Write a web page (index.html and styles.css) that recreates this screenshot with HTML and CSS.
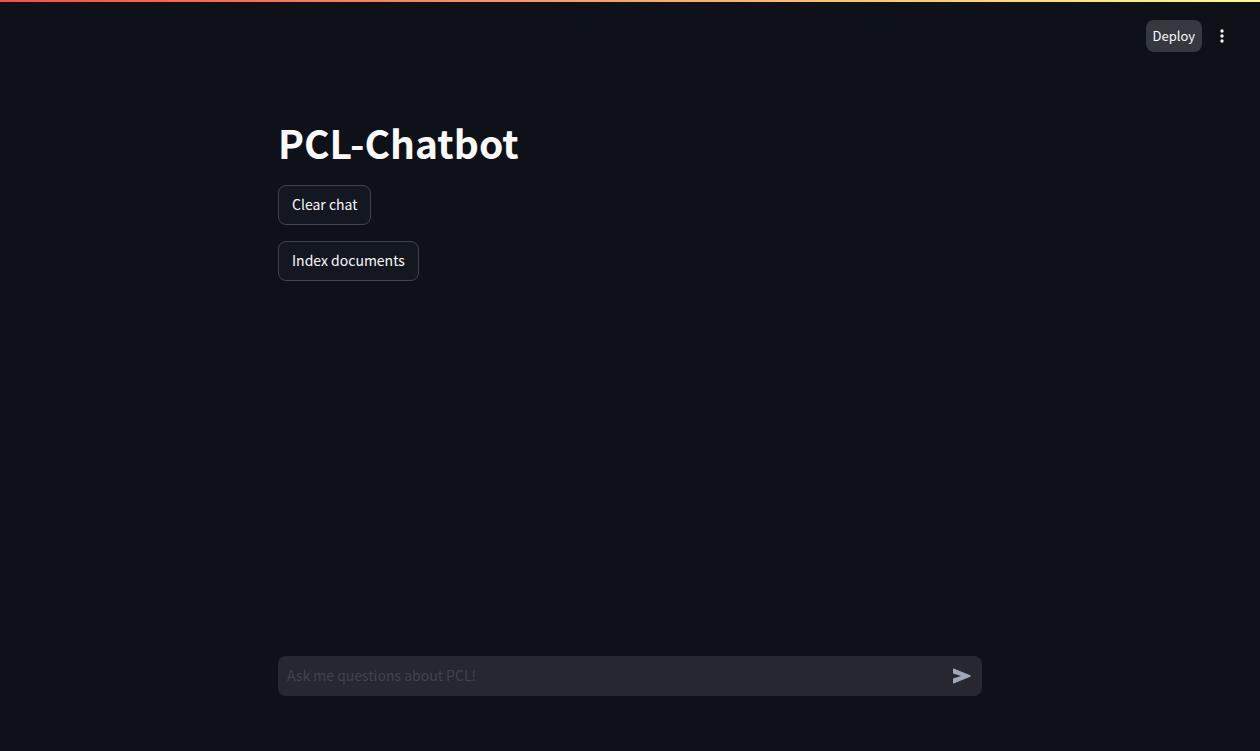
FILE: index.html
```html
<!DOCTYPE html>
<html lang="en">
<head>
<meta charset="utf-8">
<meta name="viewport" content="width=device-width, initial-scale=1">
<title>PCL-Chatbot</title>
<link rel="stylesheet" href="styles.css">
</head>
<body>
<div class="decoration"></div>
<header class="toolbar">
  <button class="deploy" type="button">Deploy</button>
  <button class="menu" type="button" aria-label="Main menu">
    <svg viewBox="0 0 24 24" width="20" height="20" fill="currentColor" aria-hidden="true"><circle cx="12" cy="6" r="2"/><circle cx="12" cy="12" r="2"/><circle cx="12" cy="18" r="2"/></svg>
  </button>
</header>
<main class="content">
  <h1 class="title">PCL-Chatbot</h1>
  <button class="action" type="button">Clear chat</button>
  <button class="action" type="button">Index documents</button>
</main>
<footer class="bottom">
  <form class="chat">
    <input class="chat-input" type="text" aria-label="Chat message" placeholder="Ask me questions about PCL!">
    <button class="send" type="button" aria-label="Send message">
      <svg viewBox="0 0 20 20" width="20" height="20" fill="currentColor" aria-hidden="true"><path d="M1 2.300 18.300 9.200Q19.300 10 18.300 10.800L1 17.700v-5.200L9 10 1 7.500z"/></svg>
    </button>
  </form>
</footer>
</body>
</html>
```
FILE: styles.css
```css
* { box-sizing: border-box; }
body {
  margin: 0;
  min-height: 100vh;
  display: flex;
  flex-direction: column;
  background: #0e1117;
  color: #fafafa;
  font-family: "Noto Sans CJK JP", "Noto Sans", sans-serif;
  font-size: 14px;
}
button, input { font: inherit; color: inherit; margin: 0; }
button { cursor: pointer; }
svg { display: block; }
.decoration {
  height: 2px;
  background: linear-gradient(90deg, #ff4b4b, #fffd80);
}
.toolbar {
  display: flex;
  justify-content: flex-end;
  align-items: center;
  gap: 4px;
  padding: 18px 22px 0;
}
.deploy {
  height: 32px;
  padding: 0 7px 2px;
  border: 0;
  border-radius: 8px;
  background: #363840;
  font-size: 13px;
}
.menu {
  display: grid;
  place-items: center;
  width: 32px;
  height: 32px;
  padding: 0;
  border: 0;
  background: none;
}
.content, .bottom {
  width: 100%;
  max-width: 736px;
  margin: 0 auto;
  padding: 0 16px;
}
.content {
  flex: 1;
  display: flex;
  flex-direction: column;
  align-items: flex-start;
  gap: 16px;
  padding-top: 64px;
}
.title {
  margin: 0;
  font-size: 39px;
  line-height: 53px;
  font-weight: 700;
}
.action {
  height: 40px;
  padding: 0 13px 2px;
  border: 1px solid #41444c;
  border-radius: 8px;
  background: #131720;
}
.bottom { padding-bottom: 55px; }
.chat {
  display: flex;
  align-items: center;
  height: 40px;
  border-radius: 8px;
  background: #262730;
}
.chat-input {
  flex: 1;
  min-width: 0;
  height: 40px;
  padding: 0 9px 2px;
  border: 0;
  outline: 0;
  background: none;
}
.chat-input::placeholder { color: #41424d; opacity: 1; }
.send {
  display: grid;
  place-items: center;
  width: 40px;
  height: 40px;
  padding: 0;
  border: 0;
  background: none;
  color: #a3a8b8;
}
```
